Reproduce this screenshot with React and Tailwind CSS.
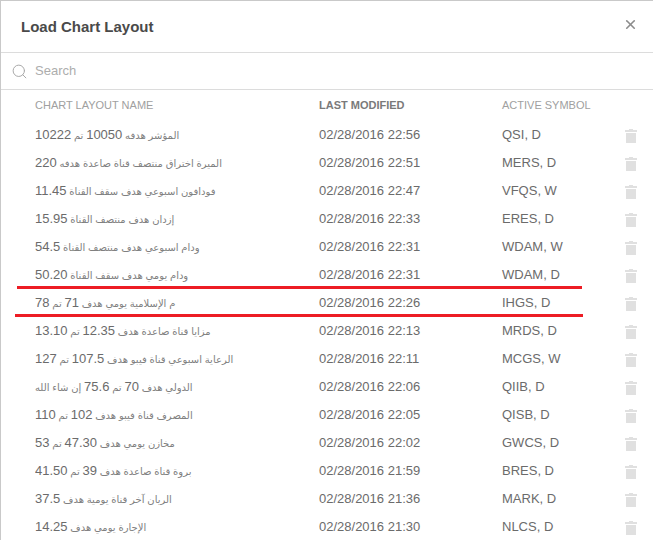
import React from 'react';
import { Search, X } from 'lucide-react';

const FONT = "font-['Liberation_Sans','DejaVu_Sans',sans-serif]";

const rows = [
  ['المؤشر هدفه 10050 تم 10222', '02/28/2016 22:56', 'QSI, D'],
  ['الميرة اختراق منتصف قناة صاعدة هدفه 220', '02/28/2016 22:51', 'MERS, D'],
  ['فودافون اسبوعي هدف سقف القناة 11.45', '02/28/2016 22:47', 'VFQS, W'],
  ['إزدان هدف منتصف القناة 15.95', '02/28/2016 22:33', 'ERES, D'],
  ['ودام اسبوعي هدف منتصف القناة 54.5', '02/28/2016 22:31', 'WDAM, W'],
  ['ودام يومي هدف سقف القناة 50.20', '02/28/2016 22:31', 'WDAM, D'],
  ['م الإسلامية يومي هدف 71 تم 78', '02/28/2016 22:26', 'IHGS, D'],
  ['مزايا قناة صاعدة هدف 12.35 تم 13.10', '02/28/2016 22:13', 'MRDS, D'],
  ['الرعاية اسبوعي قناة فيبو هدف 107.5 تم 127', '02/28/2016 22:11', 'MCGS, W'],
  ['الدولي هدف 70 تم 75.6 إن شاء الله', '02/28/2016 22:06', 'QIIB, D'],
  ['المصرف قناة فيبو هدف 102 تم 110', '02/28/2016 22:05', 'QISB, D'],
  ['مخازن يومي هدف 47.30 تم 53', '02/28/2016 22:02', 'GWCS, D'],
  ['بروة قناة صاعدة هدف 39 تم 41.50', '02/28/2016 21:59', 'BRES, D'],
  ['الريان آخر قناة يومية هدف 37.5', '02/28/2016 21:36', 'MARK, D'],
  ['الإجارة يومي هدف 14.25', '02/28/2016 21:30', 'NLCS, D'],
];

const TrashIcon = () => (
  <svg width="12" height="15" viewBox="0 0 12 15" className="text-[#e0e0e0]" fill="currentColor">
    <rect x="4" y="0" width="4" height="1" />
    <rect x="0" y="1" width="12" height="2" />
    <rect x="1" y="4" width="10" height="10" />
  </svg>
);

// the arabic words are set smaller than the numbers between them
const Name = ({ text }) => (
  <div dir="rtl" className="text-left whitespace-nowrap overflow-hidden">
    {text.split(/([0-9.]+)/).map((part, i) =>
      i % 2 ? <span key={i}>{part}</span> : <span key={i} className="text-[10px] text-[#808080]">{part}</span>
    )}
  </div>
);

const Row = ({ name, date, symbol }) => (
  <div className="grid grid-cols-[284px_183px_123px_1fr] items-center h-[28px] pl-[34px] text-[13px] text-[#6b6b6b]">
    <Name text={name} />
    <div>{date}</div>
    <div>{symbol}</div>
    <div className="pt-[3px]"><TrashIcon /></div>
  </div>
);

export default function App() {
  return (
    <div className={`relative h-[540px] w-[653px] overflow-hidden bg-white border-t border-l border-[#c9c9c9] ${FONT}`}>
      <div className="flex items-center justify-between h-[52px] pl-[20px] pr-[15px] border-b border-[#dcdcdc]">
        <h1 className="text-[15px] font-bold text-[#4a4a4a] mt-[1px]">Load Chart Layout</h1>
        <X className="w-[15px] h-[15px] text-[#8c8c8c] mb-[4px]" strokeWidth={2.6} />
      </div>
      <div className="flex items-center gap-[7px] h-[37px] pl-[10px] border-b border-[#dcdcdc]">
        <Search className="w-[17px] h-[17px] text-[#a8a8a8]" strokeWidth={1.4} />
        <span className="text-[13px] text-[#adadad]">Search</span>
      </div>
      <div className="grid grid-cols-[284px_183px_1fr] items-center h-[31px] pl-[34px] pb-[1px] text-[11px] text-[#a0a0a0]">
        <div>CHART LAYOUT NAME</div>
        <div className="font-bold text-[#7a7a7a]">LAST MODIFIED</div>
        <div>ACTIVE SYMBOL</div>
      </div>
      {rows.map(([name, date, symbol]) => (
        <Row key={date + symbol} name={name} date={date} symbol={symbol} />
      ))}
      <div className="absolute left-[16px] top-[285px] w-[565px] h-[3px] bg-[#ed1c24]" />
      <div className="absolute left-[14px] top-[313px] w-[568px] h-[3px] bg-[#ed1c24]" />
    </div>
  );
}
